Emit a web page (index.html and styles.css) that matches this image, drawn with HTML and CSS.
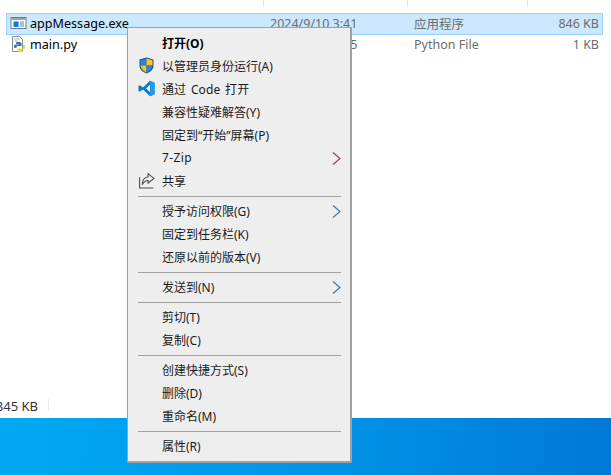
FILE: index.html
```html
<!DOCTYPE html>
<html lang="zh-CN">
<head>
<meta charset="utf-8">
<title>右键菜单</title>
<link rel="stylesheet" href="styles.css">
</head>
<body>
<div class="screen">
  <main class="explorer">
    <div class="headers"><span class="hcell"></span><span class="hcell"></span><span class="hcell"></span><span class="hcell"></span></div>
    <div class="rows">
      <div class="file selected">
        <span class="fname">
          <svg class="ficon" viewBox="0 0 17 17"><rect x="1" y="2.500" width="15" height="11" fill="#fff" stroke="#6e7a86"/><rect x="1.500" y="3" width="14" height="2" fill="#98a6b4"/><rect x="3.500" y="6.500" width="5" height="5.500" fill="#0a78d4"/><path d="M10 7h4M10 9h4M10 11h4" stroke="#3c86c8"/></svg>
          appMessage.exe
        </span>
        <span class="fdate">2024/9/10 3:41</span>
        <span class="ftype">应用程序</span>
        <span class="fsize">846 KB</span>
      </div>
      <div class="file">
        <span class="fname">
          <svg class="ficon" viewBox="0 0 17 17"><path d="M2.500.5h7l3 3v12h-10z" fill="#fff" stroke="#8a8f96"/><path d="M4.500 3h5M4.500 5h3" stroke="#a9adb3"/><path d="M7 6h3q1.500 0 1.500 1.500v2.500h-4q-1 0-1 1v1H5Q4 12 4 10.500V10q0-1.500 1.500-1.500h3V8H6V7q0-1 1-1z" fill="#3a76a8"/><path d="M15 9v2.500q0 1.500-1.500 1.500h-1v2q0 1-1.500 1H9q-1.500 0-1.500-1v-2.500h4q1.500 0 1.500-1.500V9z" fill="#f6cf3f"/></svg>
          main.py
        </span>
        <span class="fdate">2024/9/10 3:25</span>
        <span class="ftype">Python File</span>
        <span class="fsize">1 KB</span>
      </div>
    </div>
    <footer class="status"><span class="count"><span>845 KB</span></span><span class="status-rule"></span></footer>
  </main>
  <div class="desktop"></div>

  <nav class="menu">
    <div class="item strong"><span class="mi"></span><span class="label">打开(O)</span></div>
    <div class="item"><span class="mi">
      <svg class="icon" viewBox="0 0 16 17"><path d="M8 .5 15 2.500V9q0 4.500-7 7.500Q1 13.500 1 9V2.500z" fill="#1f4f8f"/><path d="M8 1.500V8.500H2V3.200z" fill="#2a86dc"/><path d="M8 1.500 14 3.200V8.500H8z" fill="#f7c325"/><path d="M2 8.500h6v7Q2.500 13 2 8.500z" fill="#f7c325"/><path d="M8 8.500h6Q13.500 13 8 15.500z" fill="#2a86dc"/></svg>
    </span><span class="label">以管理员身份运行(A)</span></div>
    <div class="item"><span class="mi">
      <svg class="icon code" viewBox="0 0 18 18"><path d="M12.800.8 17.500 3v12l-4.700 2.200L5.300 10 2 12.500.5 11.700V6.300L2 5.500 5.300 8zM12.800 5 8.500 9l4.300 4z" fill="#0a7cc4"/><path d="M12.800.8 17.500 3v12l-4.700 2.200z" fill="#1f9cf0"/></svg>
    </span><span class="label wide">通过 Code 打开</span></div>
    <div class="item"><span class="mi"></span><span class="label">兼容性疑难解答(Y)</span></div>
    <div class="item"><span class="mi"></span><span class="label">固定到“开始”屏幕(P)</span></div>
    <div class="item"><span class="mi"></span><span class="label latin">7-Zip</span>
      <svg class="arrow red" viewBox="0 0 9 13"><path d="M1 .5 8 6.500 1 12.500"/></svg></div>
    <div class="item"><span class="mi">
      <svg class="icon" viewBox="0 0 16 16"><path d="M1.500 5v10h13" fill="none" stroke="#4a4a4a"/><path d="M9.500 1.500 15 6l-5.500 4.500V8Q6 8 4 12q0-6.500 5.500-7.500z" fill="none" stroke="#4a4a4a"/></svg>
    </span><span class="label">共享</span></div>
    <hr class="sep">
    <div class="item"><span class="mi"></span><span class="label">授予访问权限(G)</span>
      <svg class="arrow" viewBox="0 0 9 13"><path d="M1 .5 8 6.500 1 12.500"/></svg></div>
    <div class="item"><span class="mi"></span><span class="label">固定到任务栏(K)</span></div>
    <div class="item"><span class="mi"></span><span class="label">还原以前的版本(V)</span></div>
    <hr class="sep">
    <div class="item"><span class="mi"></span><span class="label">发送到(N)</span>
      <svg class="arrow" viewBox="0 0 9 13"><path d="M1 .5 8 6.500 1 12.500"/></svg></div>
    <hr class="sep">
    <div class="item"><span class="mi"></span><span class="label">剪切(T)</span></div>
    <div class="item"><span class="mi"></span><span class="label">复制(C)</span></div>
    <hr class="sep">
    <div class="item"><span class="mi"></span><span class="label">创建快捷方式(S)</span></div>
    <div class="item"><span class="mi"></span><span class="label">删除(D)</span></div>
    <div class="item"><span class="mi"></span><span class="label">重命名(M)</span></div>
    <hr class="sep">
    <div class="item"><span class="mi"></span><span class="label">属性(R)</span></div>
  </nav>
</div>
</body>
</html>
```

FILE: styles.css
```css
* { box-sizing: border-box; }
html, body { margin: 0; padding: 0; }
body {
  font-family: "Noto Sans", "Noto Sans CJK SC", sans-serif;
  font-size: 12px;
  color: #1a1a1a;
  background: #fff;
}
.screen {
  position: relative;
  width: 611px;
  height: 475px;
  overflow: hidden;
  display: flex;
  flex-direction: column;
}
.explorer {
  height: 418px;
  display: flex;
  flex-direction: column;
  background: #fff;
}
.headers {
  height: 13px;
  display: grid;
  grid-template-columns: 264px 144px 120px 83px;
}
.hcell {
  height: 7px;
  border-right: 1px solid #e5e5e5;
}
.hcell:last-child { border-right: 0; }
.rows {
  flex: 1;
  padding: 0 8px 0 6px;
}
.file {
  height: 22px;
  display: grid;
  grid-template-columns: 257px 144px 120px 1fr;
  align-items: center;
  padding-bottom: 1px;
  border: 1px solid transparent;
}
.file + .file { height: 21px; padding-bottom: 2px; }
.file.selected {
  background: #cce8ff;
  border-color: #99d1ff;
}
.fname {
  display: flex;
  align-items: center;
  gap: 3px;
  padding-left: 3px;
  font-size: 12.600px;
  color: #000;
  white-space: nowrap;
}
.ficon { width: 17px; height: 17px; flex: none; }
.fdate, .ftype, .fsize { color: #6d6d6d; font-size: 12.500px; white-space: nowrap; }
.fdate { padding-left: 6px; }
.ftype { padding-left: 6px; }
.fsize { text-align: right; padding-right: 3px; }
.status {
  height: 23px;
  padding-top: 2px;
  display: flex;
  align-items: flex-start;
}
.count {
  width: 38px;
  overflow: hidden;
  display: flex;
  justify-content: flex-end;
  white-space: nowrap;
  color: #333;
  font-size: 13px;
}
.status-rule {
  width: 1px;
  height: 11px;
  margin: 2px 0 0 10px;
  background: #eaeaea;
}
.desktop {
  flex: 1;
  background: linear-gradient(95deg, #00a9f2 0%, #0096e8 50%, #0078d7 100%);
}
.menu {
  position: absolute;
  left: 127px;
  top: 27px;
  width: 225px;
  height: 436px;
  padding: 4px 2px;
  background: #eeeeee;
  border: 2px solid #a0a0a0;
  border-width: 1px 2px 2px 1px;
}
.item {
  height: 23px;
  padding-bottom: 2px;
  display: flex;
  align-items: center;
  color: #1a1a1a;
  font-size: 12px;
  white-space: nowrap;
}
.item.strong { font-weight: 700; color: #000; }
.mi {
  width: 32px;
  flex: none;
  display: flex;
  justify-content: center;
}
.label { flex: 1; }
.wide { word-spacing: 1.500px; letter-spacing: .100px; }
.latin { letter-spacing: .400px; }
.icon { width: 17px; height: 17px; display: block; }
.arrow {
  width: 9px;
  height: 13px;
  margin: 2px 7px 0 0;
  fill: none;
  stroke: #3f6f98;
  stroke-width: 1.100;
}
.arrow.red { stroke: #9a3a46; }
.sep {
  height: 1px;
  margin: 3px 7px 3px 8px;
  border: 0;
  background: #a0a0a0;
}
```
